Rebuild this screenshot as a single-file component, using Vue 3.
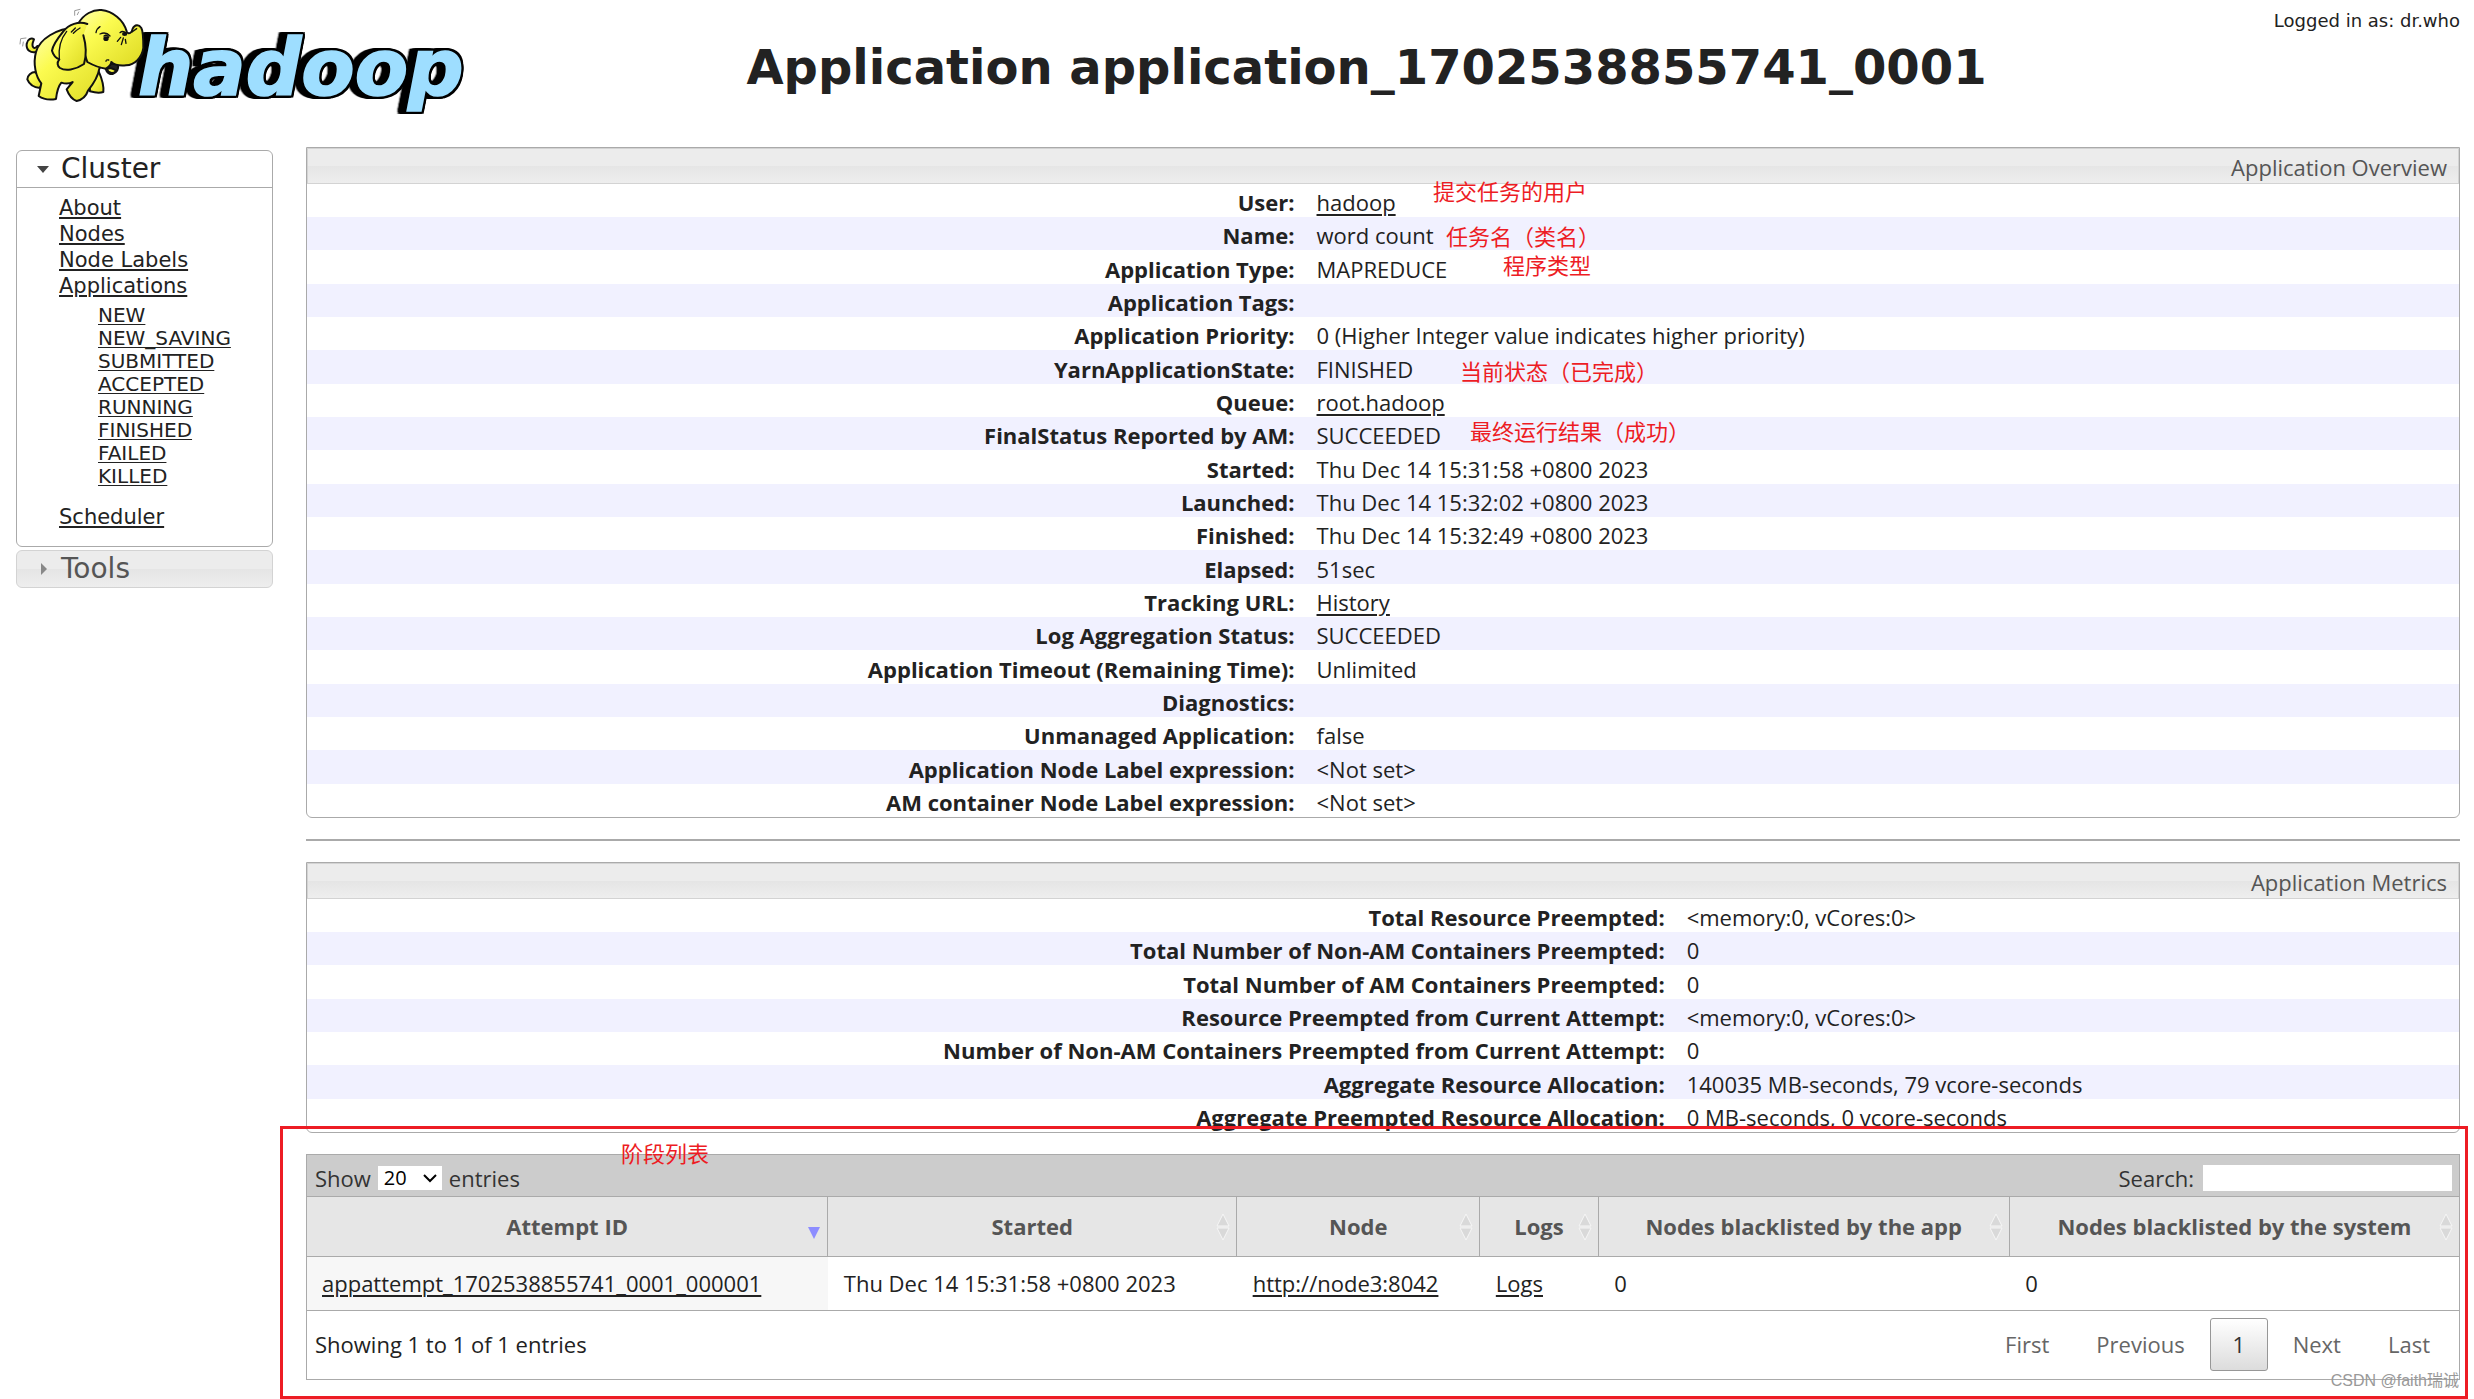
<script setup>
import { ref } from 'vue'

const clusterLinks = ['About', 'Nodes', 'Node Labels', 'Applications']
const states = ['NEW', 'NEW_SAVING', 'SUBMITTED', 'ACCEPTED', 'RUNNING', 'FINISHED', 'FAILED', 'KILLED']

const overview = [
  { label: 'User:', value: 'hadoop', link: true },
  { label: 'Name:', value: 'word count' },
  { label: 'Application Type:', value: 'MAPREDUCE' },
  { label: 'Application Tags:', value: '' },
  { label: 'Application Priority:', value: '0 (Higher Integer value indicates higher priority)' },
  { label: 'YarnApplicationState:', value: 'FINISHED' },
  { label: 'Queue:', value: 'root.hadoop', link: true },
  { label: 'FinalStatus Reported by AM:', value: 'SUCCEEDED' },
  { label: 'Started:', value: 'Thu Dec 14 15:31:58 +0800 2023' },
  { label: 'Launched:', value: 'Thu Dec 14 15:32:02 +0800 2023' },
  { label: 'Finished:', value: 'Thu Dec 14 15:32:49 +0800 2023' },
  { label: 'Elapsed:', value: '51sec' },
  { label: 'Tracking URL:', value: 'History', link: true },
  { label: 'Log Aggregation Status:', value: 'SUCCEEDED' },
  { label: 'Application Timeout (Remaining Time):', value: 'Unlimited' },
  { label: 'Diagnostics:', value: '' },
  { label: 'Unmanaged Application:', value: 'false' },
  { label: 'Application Node Label expression:', value: '<Not set>' },
  { label: 'AM container Node Label expression:', value: '<Not set>' },
]

const metrics = [
  { label: 'Total Resource Preempted:', value: '<memory:0, vCores:0>' },
  { label: 'Total Number of Non-AM Containers Preempted:', value: '0' },
  { label: 'Total Number of AM Containers Preempted:', value: '0' },
  { label: 'Resource Preempted from Current Attempt:', value: '<memory:0, vCores:0>' },
  { label: 'Number of Non-AM Containers Preempted from Current Attempt:', value: '0' },
  { label: 'Aggregate Resource Allocation:', value: '140035 MB-seconds, 79 vcore-seconds' },
  { label: 'Aggregate Preempted Resource Allocation:', value: '0 MB-seconds, 0 vcore-seconds' },
]

const notes = [
  { text: '提交任务的用户', x: 1126, y: 30 },
  { text: '任务名（类名）', x: 1139, y: 75 },
  { text: '程序类型', x: 1196, y: 104 },
  { text: '当前状态（已完成）', x: 1153, y: 210 },
  { text: '最终运行结果（成功）', x: 1163, y: 270 },
]

const columns = ['Attempt ID', 'Started', 'Node', 'Logs', 'Nodes blacklisted by the app', 'Nodes blacklisted by the system']
const pageSize = ref('20')
const search = ref('')
</script>

<template>
  <div class="page">
    <header class="top">
      <a class="logo" href="#" aria-label="hadoop">
        <svg width="467" height="120" viewBox="0 0 1401 360">
          <defs>
            <linearGradient id="skin" x1="0" y1="0" x2="1" y2="1">
              <stop offset="0" stop-color="#ffffb0" />
              <stop offset="0.35" stop-color="#fbfb50" />
              <stop offset="1" stop-color="#dcd820" />
            </linearGradient>
          </defs>
          <text class="word" x="414" y="285">hadoop</text>
          <g fill="url(#skin)" stroke="#111" stroke-width="6" stroke-linejoin="round" stroke-linecap="round">
            <path d="M108 156C92 160 78 150 80 132C82 118 94 112 102 118C98 128 94 136 100 142C104 146 110 142 112 138" />
            <path d="M106 216C94 216 82 226 82 238C88 254 102 262 120 264L130 240Z" />
            <path d="M296 214C304 232 312 256 310 276C298 280 284 278 270 274L268 240Z" />
            <path d="M226 84C170 84 118 118 108 156C98 192 108 232 124 250L116 288C130 298 152 300 168 297C170 280 172 262 184 248C196 252 208 252 218 246L200 268C206 284 216 298 230 303C244 300 258 290 264 272C280 252 294 232 298 206L330 150Z" />
            <path d="M314 190C314 208 322 224 338 222C350 218 356 206 354 192Z" fill="#222" />
            <path d="M320 208C330 202 342 206 348 212C342 222 328 222 320 208Z" />
            <path d="M234 72C250 42 280 28 304 30C338 34 370 58 380 94C386 106 396 98 398 86C404 74 416 72 424 84C430 94 430 118 430 144C426 174 404 194 378 196C356 198 342 194 334 186C334 190 330 198 318 206C300 204 280 196 262 186L240 120Z" />
            <path d="M262 72C236 62 206 74 190 94C172 116 158 138 156 152C160 166 168 174 178 178C170 188 172 198 180 204C196 214 226 210 252 192C260 166 258 134 250 106" />
            <path d="M200 94C184 114 174 140 178 178M226 84L214 96M240 84C232 88 226 94 220 100" fill="none" stroke-width="4" />
            <path d="M288 98Q290 86 300 80M300 102Q318 94 330 108M312 108Q320 102 326 112M360 98Q368 90 380 100M352 124L362 112M364 134L370 114M378 130L376 118M396 96L410 86M318 184Q318 178 326 180" fill="none" stroke-width="4" />
            <ellipse cx="318" cy="116" rx="8" ry="7" fill="#111" stroke="none" />
            <ellipse cx="374" cy="102" rx="8" ry="6" fill="#111" stroke="none" />
            <path d="M224 46V32L240 28M232 44L236 36M60 132L62 116L78 114M68 138L70 126" fill="none" stroke="#999" stroke-width="3" />
          </g>
        </svg>
      </a>
      <h1>Application application_1702538855741_0001</h1>
      <div class="login">Logged in as: dr.who</div>
    </header>

    <div class="body">
      <nav class="side">
        <section class="group">
          <h3><svg width="12" height="7" viewBox="0 0 12 7"><path d="M0 0H12L6 7Z" fill="#444" /></svg>Cluster</h3>
          <ul class="links">
            <li v-for="l in clusterLinks" :key="l"><a href="#">{{ l }}</a></li>
            <li>
              <ul class="states">
                <li v-for="s in states" :key="s"><a href="#">{{ s }}</a></li>
              </ul>
            </li>
            <li><a href="#">Scheduler</a></li>
          </ul>
        </section>
        <section class="group closed">
          <h3><svg width="12" height="12" viewBox="0 0 12 12"><path d="M4 0V12L10 6Z" fill="#888" /></svg>Tools</h3>
        </section>
      </nav>

      <main>
        <section class="panel">
          <h2>Application Overview</h2>
          <table class="info overview">
            <tbody>
              <tr v-for="row in overview" :key="row.label">
                <th scope="row">{{ row.label }}</th>
                <td><a v-if="row.link" href="#">{{ row.value }}</a><template v-else>{{ row.value }}</template></td>
              </tr>
            </tbody>
          </table>
          <span v-for="n in notes" :key="n.text" class="note" :style="{ left: n.x + 'px', top: n.y + 'px' }">{{ n.text }}</span>
        </section>

        <hr>

        <section class="panel">
          <h2>Application Metrics</h2>
          <table class="info metrics">
            <tbody>
              <tr v-for="row in metrics" :key="row.label">
                <th scope="row">{{ row.label }}</th>
                <td>{{ row.value }}</td>
              </tr>
            </tbody>
          </table>
        </section>

        <section class="attempts">
          <div class="toolbar">
            <label class="length">Show
              <span class="pick">
                <select v-model="pageSize"><option>20</option><option>40</option><option>60</option></select>
                <svg width="14" height="9" viewBox="0 0 14 9"><path d="M1 1L7 7L13 1" fill="none" stroke="#000" stroke-width="2" /></svg>
              </span>
              entries</label>
            <label class="search">Search: <input v-model="search" type="text"></label>
          </div>
          <table class="grid">
            <colgroup><col class="c-id"><col class="c-start"><col class="c-node"><col class="c-logs"><col class="c-app"><col></colgroup>
            <thead>
              <tr>
                <th v-for="(c, i) in columns" :key="c" scope="col">
                  {{ c }}
                  <svg class="sort" width="14" height="28" viewBox="0 0 14 28">
                    <path v-if="i === 0" d="M1 14H13L7 26Z" fill="#8d8dff" />
                    <path v-else d="M7 1L13 13H1ZM1 15H13L7 27Z" fill="#d9d9d9" stroke="#f6f6f6" />
                  </svg>
                </th>
              </tr>
            </thead>
            <tbody>
              <tr>
                <td class="sorted"><a href="#">appattempt_1702538855741_0001_000001</a></td>
                <td>Thu Dec 14 15:31:58 +0800 2023</td>
                <td><a href="#">http://node3:8042</a></td>
                <td><a href="#">Logs</a></td>
                <td>0</td>
                <td>0</td>
              </tr>
            </tbody>
          </table>
          <div class="footer">
            <span>Showing 1 to 1 of 1 entries</span>
            <div class="pager">
              <button type="button">First</button>
              <button type="button">Previous</button>
              <button type="button" class="current">1</button>
              <button type="button">Next</button>
              <button type="button">Last</button>
            </div>
          </div>
          <div class="frame"></div>
          <span class="note stage">阶段列表</span>
          <span class="watermark">CSDN @faith瑞诚</span>
        </section>
      </main>
    </div>
  </div>
</template>

<style>
body {
  margin: 0;
  background: #fff;
}
</style>

<style scoped>
.page {
  box-sizing: border-box;
  padding: 0 14px 19px 16px;
  color: #222;
  font-family: "Open Sans", "Noto Sans CJK SC", sans-serif;
  font-size: 22px;
}
a {
  color: #222;
  text-decoration: underline;
  text-decoration-thickness: 2px;
  text-underline-offset: 3px;
}
h1, h2, h3, ul {
  margin: 0;
  padding: 0;
  font-weight: normal;
  list-style: none;
}

.top {
  display: flex;
  height: 147px;
  font-family: "DejaVu Sans", sans-serif;
}
.logo {
  flex: 0 0 450px;
  margin-left: -16px;
}
.logo svg {
  display: block;
}
.word {
  fill: #9edeff;
  stroke: #9edeff;
  stroke-width: 5px;
  font-size: 233px;
  font-weight: bold;
  font-style: italic;
  filter: drop-shadow(6px 0 0 #000) drop-shadow(-6px 0 0 #000) drop-shadow(0 6px 0 #000) drop-shadow(0 -6px 0 #000) drop-shadow(-10px 0 0 #000) drop-shadow(-10px 0 0 #000);
}
h1 {
  flex: 1;
  padding-top: 39px;
  font-size: 48px;
  line-height: 56px;
  font-weight: bold;
  text-align: center;
  white-space: nowrap;
}
.login {
  flex: 0 0 194px;
  padding-top: 9px;
  font-size: 18px;
  line-height: 24px;
  text-align: right;
  white-space: nowrap;
}

.body {
  display: flex;
  align-items: flex-start;
  gap: 33px;
}
.side {
  flex: 0 0 257px;
  box-sizing: border-box;
  padding-top: 3px;
  font-family: "DejaVu Sans", sans-serif;
}
.group {
  border: 1px solid #aaa;
  border-radius: 6px;
}
.group h3 {
  display: flex;
  align-items: center;
  gap: 12px;
  padding-left: 20px;
  height: 36px;
  font-size: 28px;
  line-height: 36px;
}
.group h3 svg {
  flex: none;
}
.closed {
  margin-top: 3px;
  border-color: #d3d3d3;
  background: linear-gradient(#ececec 50%, #e5e5e5 50%, #eee);
  color: #555;
}
.links {
  border-top: 1px solid #aaa;
  padding: 7px 0 16px 42px;
  font-size: 21px;
  line-height: 26px;
}
.states {
  padding: 5px 0 16px 39px;
  font-size: 20px;
  line-height: 23px;
}
.links a {
  text-underline-offset: 2px;
}
.states a {
  text-decoration-thickness: 1px;
}

main {
  flex: 1;
  min-width: 0;
}
.panel {
  position: relative;
  border: 1px solid #aaa;
  border-radius: 0 0 6px 6px;
}
.panel h2 {
  box-sizing: border-box;
  height: 36px;
  padding: 2px 11px 0;
  border: 1px solid #d3d3d3;
  background: linear-gradient(#ececec 50%, #e5e5e5 50%, #eee);
  color: #555;
  font-size: 22px;
  line-height: 32px;
  text-align: right;
}
table {
  width: 100%;
  border-collapse: collapse;
  table-layout: fixed;
}
.info th, .info td {
  box-sizing: border-box;
  height: 33px;
  padding: 3px 11px 0;
  line-height: 30px;
  text-align: left;
  white-space: nowrap;
}
.info th {
  text-align: right;
  font-weight: bold;
}
.info tr:nth-child(3n) > * {
  height: 34px;
}
.info tr:nth-child(even) {
  background: #f1f1ff;
}
.overview th {
  width: 46.4%;
}
.metrics th {
  width: 63.6%;
}
hr {
  height: 2px;
  margin: 21px 0;
  border: 0;
  background: #aaa;
}
.note {
  position: absolute;
  color: #ed1c24;
  font-family: "Noto Sans CJK SC", sans-serif;
  font-size: 22px;
  line-height: 24px;
  white-space: nowrap;
}

.attempts {
  position: relative;
  margin-top: 21px;
  border: 1px solid #aaa;
}
.toolbar {
  display: flex;
  justify-content: space-between;
  align-items: center;
  height: 41px;
  padding: 0 7px 0 8px;
  background: #ccc;
  color: #333;
}
.toolbar label {
  display: flex;
  align-items: center;
  padding-top: 5px;
  line-height: 30px;
}
.length {
  gap: 7px;
}
.search {
  gap: 9px;
}
.pick {
  position: relative;
  display: flex;
}
.pick svg {
  position: absolute;
  right: 5px;
  top: 8px;
  pointer-events: none;
}
select {
  width: 64px;
  height: 24px;
  padding: 0 6px;
  border: 0;
  border-radius: 0;
  background: #fff;
  appearance: none;
  color: #000;
  font-family: inherit;
  font-size: 20px;
  line-height: 24px;
}
input {
  box-sizing: border-box;
  width: 249px;
  height: 26px;
  border: 0;
  padding: 0 4px;
  background: #fff;
  font: inherit;
}
.grid th {
  position: relative;
  height: 57px;
  padding: 0 0 2px;
  border: 1px solid #aaa;
  border-left: 0;
  background: #e6e6e6;
  color: #555;
  font-weight: bold;
  white-space: nowrap;
}
.grid th:last-child {
  border-right: 0;
}
.grid td {
  height: 51px;
  padding: 0 16px 2px;
  border-bottom: 1px solid #aaa;
  white-space: nowrap;
}
.grid td.sorted {
  padding-left: 15px;
  background: #f7f7f7;
}
.c-id { width: 24.2%; }
.c-start { width: 19%; }
.c-node { width: 11.3%; }
.c-logs { width: 5.5%; }
.c-app { width: 19.1%; }
.sort {
  position: absolute;
  right: 6px;
  top: 16px;
}
.footer {
  display: flex;
  justify-content: space-between;
  align-items: center;
  height: 66px;
  padding: 0 7px 2px 8px;
}
.pager {
  display: flex;
  gap: 3px;
}
button {
  min-width: 58px;
  height: 53px;
  padding: 0 21px;
  border: 1px solid transparent;
  border-radius: 3px;
  background: none;
  color: #666;
  font: inherit;
}
.current {
  border-color: #979797;
  background: linear-gradient(#fff, #dcdcdc);
  color: #333;
}
.frame {
  position: absolute;
  inset: -29px -9px -20px -27px;
  border: 3px solid #ed1c24;
  pointer-events: none;
}
.stage {
  left: 314px;
  top: -15px;
}
.watermark {
  position: absolute;
  right: 0;
  bottom: -14px;
  color: #999;
  font-family: "Liberation Sans", "Noto Sans CJK SC", sans-serif;
  font-size: 16px;
  line-height: 24px;
}
</style>
